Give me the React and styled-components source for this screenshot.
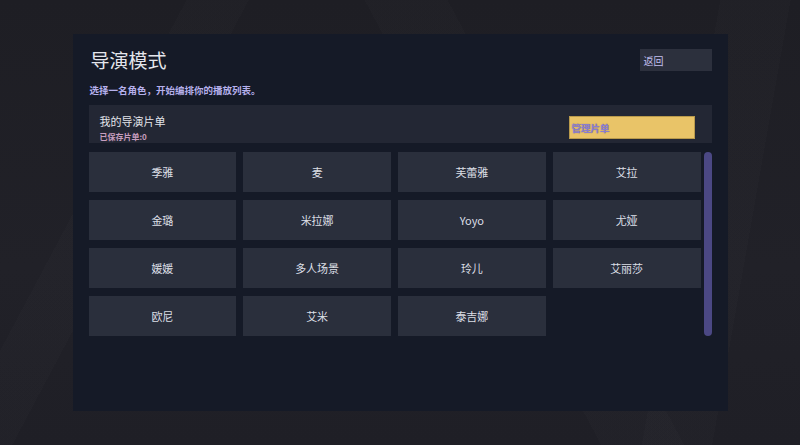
import React from "react";
import styled, { createGlobalStyle } from "styled-components";

const GlobalStyle = createGlobalStyle`
  html, body {
    margin: 0;
    padding: 0;
    width: 100%;
    height: 100%;
  }
  body {
    font-family: "Noto Sans CJK SC", "Noto Sans", sans-serif;
    background: #1f1f25;
  }
  #root {
    height: 100%;
  }
`;

const Stage = styled.div`
  width: 800px;
  height: 445px;
  display: flex;
  align-items: center;
  justify-content: center;
  background:
    linear-gradient(118deg, transparent 0 18%, rgba(255,255,255,0.012) 18% 24%, transparent 24% 100%),
    linear-gradient(62deg, transparent 0 58%, rgba(255,255,255,0.01) 58% 66%, transparent 66% 100%),
    linear-gradient(100deg, transparent 0 82%, rgba(255,255,255,0.012) 82% 90%, transparent 90% 100%),
    linear-gradient(180deg, #1e1e24 0%, #212128 60%, #1f1f26 100%);
`;

const Panel = styled.div`
  width: 655px;
  height: 377px;
  box-sizing: border-box;
  background: #151a27;
  padding: 15px 16px 0 16px;
  display: flex;
  flex-direction: column;
`;

const HeaderRow = styled.div`
  display: flex;
  align-items: center;
  justify-content: space-between;
  height: 22px;
`;

const Title = styled.h1`
  margin: 0 0 0 2px;
  font-size: 19px;
  line-height: 22px;
  font-weight: 400;
  color: #e4e6ec;
`;

const BackButton = styled.button`
  width: 72px;
  height: 22px;
  border: none;
  background: #2c303d;
  color: #c4c0f2;
  font-family: inherit;
  font-size: 10px;
  text-align: left;
  padding: 0 4px;
`;

const Subtitle = styled.p`
  margin: 12px 0 0 1px;
  font-size: 9.5px;
  line-height: 14px;
  font-weight: 700;
  color: #b5b0ec;
`;

const PlaylistBar = styled.div`
  margin-top: 8px;
  height: 38px;
  background: #232734;
  display: flex;
  align-items: flex-start;
  justify-content: space-between;
  padding: 0 17px 0 11px;
  box-sizing: border-box;
`;

const PlaylistInfo = styled.div`
  display: flex;
  flex-direction: column;
  padding-top: 8px;
`;

const PlaylistName = styled.span`
  font-size: 11px;
  line-height: 16px;
  color: #e2e4ea;
`;

const SavedCount = styled.span`
  margin-top: 3px;
  font-size: 8px;
  line-height: 10px;
  font-weight: 700;
  color: #c79ebf;
`;

const ManageButton = styled.button`
  margin-top: 11px;
  width: 126px;
  height: 23px;
  box-sizing: border-box;
  border: 1px solid #b99a4c;
  background: #e9c468;
  color: #8a7dd2;
  font-family: inherit;
  font-size: 9.5px;
  font-weight: 700;
  text-align: left;
  padding: 0 2px;
  text-shadow: 0 0 1px rgba(60, 50, 120, 0.6);
`;

const ListArea = styled.div`
  margin-top: 9px;
  display: flex;
  gap: 3px;
  align-items: flex-start;
`;

const RoleGrid = styled.div`
  flex: 1;
  display: grid;
  grid-template-columns: repeat(4, 1fr);
  column-gap: 7px;
  row-gap: 8px;
`;

const RoleCard = styled.button`
  height: 40px;
  border: none;
  background: #2a2f3c;
  color: #dcdfe6;
  font-family: inherit;
  font-size: 11px;
  padding: 0;
`;

const ScrollThumb = styled.div`
  width: 8px;
  height: 184px;
  border-radius: 4px;
  background: #4b4884;
`;

const roles = [
  "季雅", "麦", "芙蕾雅", "艾拉",
  "金璐", "米拉娜", "Yoyo", "尤娅",
  "媛媛", "多人场景", "玲儿", "艾丽莎",
  "欧尼", "艾米", "泰吉娜",
];

export default function App() {
  return (
    <>
      <GlobalStyle />
      <Stage>
        <Panel>
          <HeaderRow>
            <Title>导演模式</Title>
            <BackButton>返回</BackButton>
          </HeaderRow>
          <Subtitle>选择一名角色，开始编排你的播放列表。</Subtitle>
          <PlaylistBar>
            <PlaylistInfo>
              <PlaylistName>我的导演片单</PlaylistName>
              <SavedCount>已保存片单:0</SavedCount>
            </PlaylistInfo>
            <ManageButton>管理片单</ManageButton>
          </PlaylistBar>
          <ListArea>
            <RoleGrid>
              {roles.map((name) => (
                <RoleCard key={name}>{name}</RoleCard>
              ))}
            </RoleGrid>
            <ScrollThumb />
          </ListArea>
        </Panel>
      </Stage>
    </>
  );
}
